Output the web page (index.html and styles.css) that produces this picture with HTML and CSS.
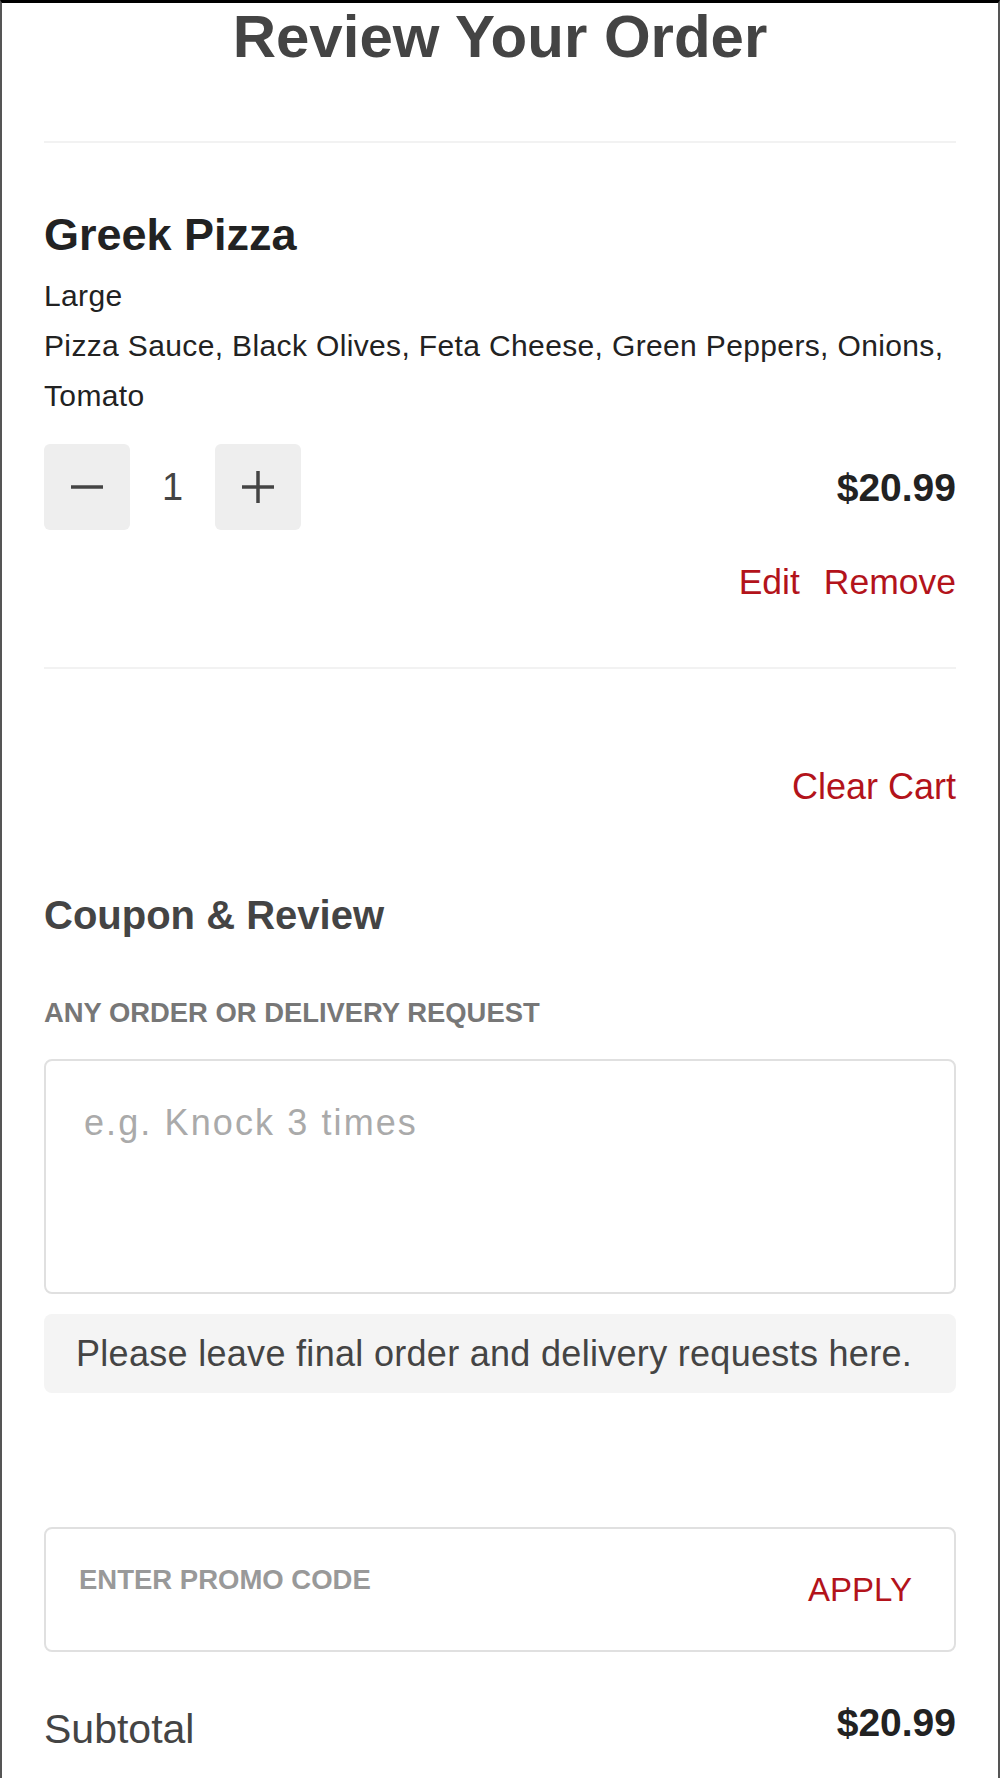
FILE: index.html
```html
<!DOCTYPE html>
<html lang="en">
<head>
  <meta charset="UTF-8">
  <meta name="viewport" content="width=device-width, initial-scale=1.0">
  <title>Review Your Order</title>
  <link rel="stylesheet" href="styles.css">
</head>
<body>

  <!-- Order review page -->
  <div class="page">
    <h1 class="page-title">Review Your Order</h1>
    <hr class="divider">

    <!-- Cart item -->
    <div class="cart-item">
      <h2 class="item-name">Greek Pizza</h2>
      <p class="item-details">Large<br>Pizza Sauce, Black Olives, Feta Cheese, Green Peppers, Onions, Tomato</p>

      <div class="item-row">
        <div class="stepper">
          <button class="step-btn" aria-label="Decrease quantity">
            <svg width="32" height="32" viewBox="0 0 32 32"><line x1="0" y1="16" x2="32" y2="16" /></svg>
          </button>
          <span class="qty">1</span>
          <button class="step-btn" aria-label="Increase quantity">
            <svg width="32" height="32" viewBox="0 0 32 32"><line x1="0" y1="16" x2="32" y2="16" /><line x1="16" y1="0" x2="16" y2="32" /></svg>
          </button>
        </div>
        <span class="item-price">$20.99</span>
      </div>

      <div class="item-actions">
        <a href="#" class="link">Edit</a>
        <a href="#" class="link">Remove</a>
      </div>
    </div>

    <hr class="divider divider-bottom">

    <div class="clear-row">
      <a href="#" class="link clear-link">Clear Cart</a>
    </div>

    <!-- Coupon & review -->
    <h3 class="section-title">Coupon &amp; Review</h3>
    <label class="field-label" for="request">ANY ORDER OR DELIVERY REQUEST</label>
    <textarea id="request" class="request-box" placeholder="e.g. Knock 3 times"></textarea>
    <div class="request-note">Please leave final order and delivery requests here.</div>

    <div class="promo-box">
      <input type="text" class="promo-input" placeholder="ENTER PROMO CODE">
      <button class="promo-apply">APPLY</button>
    </div>

    <div class="subtotal-row">
      <span class="subtotal-label">Subtotal</span>
      <span class="subtotal-value">$20.99</span>
    </div>
  </div>

</body>
</html>
```

FILE: styles.css
```css
/* General page styles */
body {
  font-family: "Liberation Sans", Arial, sans-serif;
  margin: 0;
  min-height: 100vh;
  box-sizing: border-box;
  background-color: #fff;
  border-top: 3px solid #000;
  border-left: 2px solid #555;
  border-right: 2px solid #555;
}

.page {
  padding: 0 42px;
}

/* Page title */
.page-title {
  margin: 0;
  font-size: 60px;
  line-height: 67px;
  font-weight: bold;
  color: #444;
  text-align: center;
}

.divider {
  margin: 71px 0 0;
  height: 2px;
  border: none;
  background-color: #f2f2f2;
}

.divider-bottom {
  margin-top: 65px;
}

/* Cart item */
.item-name {
  margin: 66px 0 0;
  font-size: 45px;
  line-height: 52px;
  font-weight: bold;
  color: #222;
}

.item-details {
  margin: 10px 0 0;
  font-size: 30px;
  line-height: 50px;
  letter-spacing: 0.36px;
  color: #222;
}

.item-row {
  display: flex;
  justify-content: space-between;
  align-items: center;
  margin-top: 23px;
}

.stepper {
  display: flex;
  align-items: center;
}

.step-btn {
  display: flex;
  justify-content: center;
  align-items: center;
  width: 86px;
  height: 86px;
  padding: 0;
  border: none;
  border-radius: 6px;
  background-color: #eee;
  cursor: pointer;
}

.step-btn svg {
  stroke: #444;
  stroke-width: 3.5;
}

.qty {
  width: 85px;
  text-align: center;
  font-size: 38px;
  line-height: 38px;
  color: #444;
}

.item-price {
  font-size: 39px;
  line-height: 39px;
  font-weight: bold;
  color: #222;
}

.item-actions {
  display: flex;
  justify-content: flex-end;
  gap: 24px;
  margin-top: 32px;
}

.link {
  font-size: 35.5px;
  line-height: 40px;
  color: #b3131b;
  text-decoration: none;
}

.clear-row {
  display: flex;
  justify-content: flex-end;
  margin-top: 98px;
}

.clear-link {
  font-size: 36px;
}

/* Coupon & review */
.section-title {
  margin: 86px 0 0;
  font-size: 40px;
  line-height: 44px;
  font-weight: bold;
  color: #444;
}

.field-label {
  display: block;
  margin-top: 60px;
  font-size: 27.4px;
  line-height: 32px;
  font-weight: bold;
  color: #777;
}

.request-box {
  display: block;
  width: 100%;
  height: 235px;
  margin-top: 30px;
  padding: 41px 38px;
  box-sizing: border-box;
  border: 2px solid #e0e0e0;
  border-radius: 8px;
  font-family: inherit;
  font-size: 36px;
  line-height: 42px;
  letter-spacing: 2.1px;
  color: #333;
  resize: none;
  outline: none;
}

.request-box::placeholder {
  color: #aaa;
}

.request-note {
  margin-top: 20px;
  padding: 18px 32px;
  border-radius: 8px;
  background-color: #f4f4f4;
  font-size: 36px;
  line-height: 43px;
  letter-spacing: 0.3px;
  color: #444;
}

.promo-box {
  display: flex;
  align-items: center;
  height: 125px;
  margin-top: 134px;
  padding: 0 42px 0 33px;
  box-sizing: border-box;
  border: 2px solid #e0e0e0;
  border-radius: 8px;
}

.promo-input {
  flex: 1;
  min-width: 0;
  align-self: flex-start;
  height: 34px;
  margin-top: 34px;
  padding: 0;
  border: none;
  outline: none;
  background: transparent;
  font-family: inherit;
  font-size: 27.5px;
  font-weight: bold;
  color: #333;
}

.promo-input::placeholder {
  color: #999;
}

.promo-apply {
  padding: 0;
  border: none;
  background: none;
  font-family: inherit;
  font-size: 33px;
  line-height: 40px;
  color: #b3131b;
  cursor: pointer;
}

/* Subtotal */
.subtotal-row {
  display: flex;
  justify-content: space-between;
  align-items: flex-start;
  margin-top: 53px;
}

.subtotal-label {
  font-size: 41px;
  line-height: 48px;
  color: #444;
}

.subtotal-value {
  font-size: 39px;
  line-height: 36px;
  font-weight: bold;
  color: #222;
}
```
